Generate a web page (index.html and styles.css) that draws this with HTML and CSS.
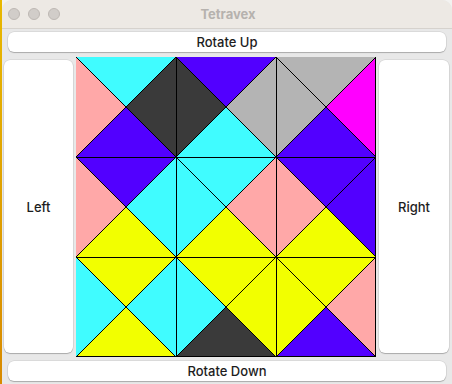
FILE: index.html
```html
<!DOCTYPE html>
<html lang="en">
<head>
   <meta charset="UTF-8">
   <title>Tetravex</title>
   <link rel="stylesheet" href="styles.css">
</head>
<body>
   <div class="window">
      <div class="titlebar">
         <div class="lights"><span></span><span></span><span></span></div>
         <div class="title">Tetravex</div>
      </div>
      <div class="content">
         <button class="btn wide">Rotate Up</button>
         <div class="middle">
            <button class="btn side left">Left</button>
            <svg id="board" class="board" width="300" height="300" viewBox="0 0 300 300" shape-rendering="crispEdges"></svg>
            <button class="btn side right">Right</button>
         </div>
         <button class="btn wide">Rotate Down</button>
      </div>
   </div>
   <script>
      const colors = {
         c: '#40fcff', p: '#5200ff', d: '#3a3a3a', g: '#b4b4b4',
         k: '#ffa8a8', m: '#ff00ff', y: '#f2ff00'
      };
      // each tile: top, right, bottom, left
      const tiles = [
         ['cdpk', 'pgcd', 'gmpg'],
         ['pcyk', 'ckyc', 'ppyk'],
         ['ycyc', 'yydc', 'ykpy']
      ];
      const board = document.getElementById('board');
      let svg = '';
      tiles.forEach((row, r) => {
         row.forEach((t, c) => {
            const x = c * 100, y = r * 100, cx = x + 50, cy = y + 50;
            svg += `<polygon points="${x},${y} ${x+100},${y} ${cx},${cy}" fill="${colors[t[0]]}"/>`;
            svg += `<polygon points="${x+100},${y} ${x+100},${y+100} ${cx},${cy}" fill="${colors[t[1]]}"/>`;
            svg += `<polygon points="${x},${y+100} ${x+100},${y+100} ${cx},${cy}" fill="${colors[t[2]]}"/>`;
            svg += `<polygon points="${x},${y} ${x},${y+100} ${cx},${cy}" fill="${colors[t[3]]}"/>`;
            svg += `<line x1="${x}" y1="${y}" x2="${x+100}" y2="${y+100}" stroke="#000" stroke-width="1"/>`;
            svg += `<line x1="${x+100}" y1="${y}" x2="${x}" y2="${y+100}" stroke="#000" stroke-width="1"/>`;
         });
      });
      [100.5, 200.5, 299.5].forEach(p => {
         svg += `<line x1="${p}" y1="0" x2="${p}" y2="300" stroke="#000" stroke-width="1"/>`;
         svg += `<line x1="0" y1="${p}" x2="300" y2="${p}" stroke="#000" stroke-width="1"/>`;
      });
      board.innerHTML = svg;
   </script>
</body>
</html>
```

FILE: styles.css
```css
* { box-sizing: border-box; }
html, body {
   margin: 0;
   padding: 0;
   width: 452px;
   height: 384px;
   overflow: hidden;
}
body {
   background:
      linear-gradient(180deg, #e8b800, #d88a00) left / 2px 100% no-repeat,
      #f3f2f0;
   font-family: Inter, "Noto Sans", sans-serif;
}
.window {
   margin-left: 2px;
   width: 450px;
   height: 384px;
   background: #e8e8e8;
   border-radius: 10px 10px 0 0;
   overflow: hidden;
}
.titlebar {
   position: relative;
   height: 29px;
   background: #ede9e4;
   border-bottom: 1px solid #d6d2cd;
   display: flex;
   align-items: center;
   justify-content: center;
}
.lights {
   position: absolute;
   left: 6px;
   top: 8px;
   display: flex;
   gap: 8px;
}
.lights span {
   width: 12px;
   height: 12px;
   border-radius: 50%;
   background: #d1cdc9;
   border: 1px solid #bdb8b3;
}
.title {
   font-size: 13px;
   font-weight: 700;
   color: #b6b2ae;
   margin-top: -1px;
   margin-left: 2px;
}
.content {
   padding-top: 3px;
   display: flex;
   flex-direction: column;
}
.btn {
   background: #fff;
   border: none;
   border-radius: 6px;
   box-shadow: 0 0 0 0.5px rgba(0,0,0,0.12), 0 1px 1px rgba(0,0,0,0.22);
   font-family: Inter, "Noto Sans", sans-serif;
   font-size: 13px;
   font-weight: 500;
   color: #1d1d1d;
   padding: 0;
   cursor: pointer;
}
.wide {
   margin: 0 6px 0 6px;
   height: 20px;
}
.middle {
   display: flex;
   margin: 5px 0 4px;
   height: 300px;
}
.side {
   margin: 3px 0 4px;
   height: 293px;
}
.left {
   width: 69px;
   margin-left: 2px;
   margin-right: 3px;
}
.right {
   width: 70px;
   margin-left: 3px;
}
.board {
   display: block;
   flex: none;
}
```
